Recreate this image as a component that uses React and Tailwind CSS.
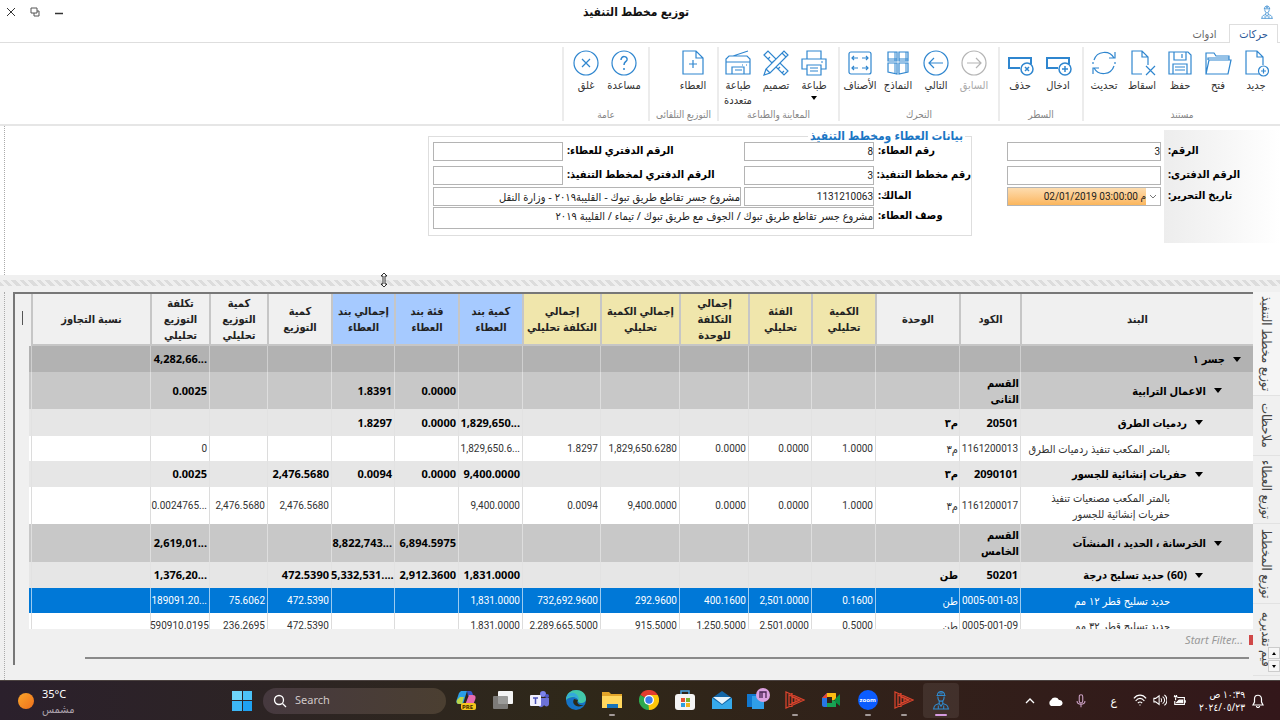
import React, { useState } from "react";

const ribbonGroups = [
  {
    title: "مستند",
    width: "w-[198px]",
    items: [
      { icon: "new", label: "جديد" },
      { icon: "open", label: "فتح" },
      { icon: "save", label: "حفظ" },
      { icon: "drop", label: "اسقاط" },
      { icon: "refresh", label: "تحديث" },
    ],
  },
  {
    title: "السطر",
    width: "w-[84px]",
    items: [
      { icon: "rowAdd", label: "ادخال" },
      { icon: "rowDelete", label: "حذف" },
    ],
  },
  {
    title: "التحرك",
    width: "w-[160px]",
    items: [
      { icon: "right", label: "السابق", disabled: true },
      { icon: "left", label: "التالي" },
      { icon: "forms", label: "النماذج" },
      { icon: "items", label: "الأصناف" },
    ],
  },
  {
    title: "المعاينة والطباعة",
    width: "w-[121px]",
    items: [
      { icon: "print", label: "طباعة", menu: true },
      { icon: "design", label: "تصميم" },
      { icon: "multiPrint", label: "طباعة متعددة" },
    ],
  },
  {
    title: "التوزيع التلقائى",
    width: "w-[69px]",
    items: [{ icon: "tender", label: "العطاء" }],
  },
  {
    title: "عامة",
    width: "w-[86px]",
    items: [
      { icon: "help", label: "مساعدة" },
      { icon: "close", label: "غلق" },
    ],
  },
];

const icons = {
  new: (
    <>
      <path d="M17 25H4V2h11l6 6v8M15 2v6h6" />
      <circle cx="21.500" cy="22" r="5" />
      <path d="M21.500 19.500v5M19 22h5" />
    </>
  ),
  open: <path d="M2 25V4h8l2 3h13v4M2 25l3-14h22l-3 14zM4 11V9h21" />,
  save: (
    <>
      <path d="M3 3h19l3 3v19H3zM8 3v8h12V3M7 25V15h14v10M9 18h10M9 21h10" />
      <path d="M16 5v4" />
    </>
  ),
  drop: <path d="M14 25H4V2h10l6 6v8M14 2v6h6M18 17l9 9M27 17l-9 9" />,
  refresh: <path d="M4 11A11 11 0 0 1 24 9M25 3v6h-6M24 17A11 11 0 0 1 4 19M3 25v-6h6M3 13v2M25 13v2" />,
  rowAdd: (
    <>
      <path d="M14 19H3V9h22v6" strokeWidth="2" />
      <circle cx="21" cy="20" r="6" fill="white" strokeWidth="1.500" />
      <path d="M21 17v6M18 20h6" strokeWidth="1.500" />
    </>
  ),
  rowDelete: (
    <>
      <path d="M14 19H3V9h22v6" strokeWidth="2" />
      <circle cx="21" cy="20" r="6" fill="white" strokeWidth="1.500" />
      <path d="M19 18l4 4M23 18l-4 4" strokeWidth="1.500" />
    </>
  ),
  right: (
    <>
      <circle cx="14" cy="14" r="12" />
      <path d="M7 14h14M16 9l5 5-5 5" />
    </>
  ),
  left: (
    <>
      <circle cx="14" cy="14" r="12" />
      <path d="M21 14H7M12 9l-5 5 5 5" />
    </>
  ),
  forms: (
    <>
      <path d="M4 3h9v9H4zM15 3h9v9h-9z" />
      <path d="M4 14h9v11l-9-2zM15 14h9v9l-9 2z" />
      <path d="M11 3v9M22 3v9M11 14v10M22 14v9M4 10h9M15 10h9" strokeWidth="1" />
    </>
  ),
  items: (
    <>
      <rect x="3" y="3" width="22" height="22" rx="2" />
      <path d="M12 9H6M8 7L6 9l2 2M16 9h6M20 7l2 2-2 2M12 19H6M8 17l-2 2 2 2M16 19h6M20 17l2 2-2 2" />
    </>
  ),
  print: (
    <>
      <path d="M7 10V2h14v8M7 20H2V10h24v10h-5" />
      <path d="M7 16h14v10H7zM10 19h8M10 22h8M21 13h2" />
    </>
  ),
  design: (
    <>
      <path d="M2 6l4-4 20 20-4 4zM6 10l2-2M10 14l2-2M16 20l2-2M20 24l2-2" />
      <path d="M2 26l2-6L22 2l4 4L8 24z" fill="white" />
      <path d="M20 4l4 4M4 20l4 4" />
    </>
  ),
  multiPrint: (
    <>
      <path d="M2 25V10l3-3h18l3 3v15H2zM2 13h24M6 7l3 0L24 2M8 25v-7h12v7M11 21h7" />
      <path d="M18 16h1M22 16h1" />
    </>
  ),
  tender: <path d="M4 2h13l7 7v16H4zM17 2v7h7M14 11v8M10 15h8" />,
  help: (
    <>
      <circle cx="14" cy="14" r="12" />
      <path d="M11 11c0-5 7-4 6 0-1 2-3 2-3 5M14 19v2" strokeWidth="1.500" />
    </>
  ),
  close: (
    <>
      <circle cx="14" cy="14" r="12" />
      <path d="M10 10l8 8M18 10l-8 8" />
    </>
  ),
};

const columns = [
  { title: "البند", width: "", tone: "bg-[#f0f0f0]" },
  { title: "الكود", width: "w-[61px]", tone: "bg-[#f0f0f0]" },
  { title: "الوحدة", width: "w-[84px]", tone: "bg-[#f0f0f0]" },
  { title: "الكمية\nتحليلي", width: "w-[64px]", tone: "bg-[#f0e6ac]" },
  { title: "الفئة\nتحليلي", width: "w-[63px]", tone: "bg-[#f0e6ac]" },
  { title: "إجمالي\nالتكلفة\nللوحدة", width: "w-[69px]", tone: "bg-[#f0e6ac]" },
  { title: "إجمالي الكمية\nتحليلي", width: "w-[79px]", tone: "bg-[#f0e6ac]" },
  { title: "إجمالي\nالتكلفة تحليلي", width: "w-[78px]", tone: "bg-[#f0e6ac]" },
  { title: "كمية بند\nالعطاء", width: "w-[64px]", tone: "bg-[#a6caff]" },
  { title: "فئة بند\nالعطاء", width: "w-[64px]", tone: "bg-[#a6caff]" },
  { title: "إجمالي بند\nالعطاء", width: "w-[63px]", tone: "bg-[#a6caff]" },
  { title: "كمية\nالتوزيع", width: "w-[64px]", tone: "bg-[#f0f0f0]" },
  { title: "كمية\nالتوزيع\nتحليلي", width: "w-[58px]", tone: "bg-[#f0f0f0]" },
  { title: "تكلفة\nالتوزيع\nتحليلي", width: "w-[59px]", tone: "bg-[#f0f0f0]" },
  { title: "نسبة التجاوز", width: "w-[119px]", tone: "bg-[#f0f0f0]" },
];

const rows = [
  { kind: "root", height: "h-[26px]", cells: ["جسر ١", "", "", "", "", "", "", "", "", "", "", "", "", "4,282,66...", ""] },
  { kind: "section", height: "h-[37px]", cells: ["الاعمال الترابية", "القسم الثانى", "", "", "", "", "", "", "", "0.0000", "1.8391", "", "", "0.0025", ""] },
  { kind: "item", height: "h-[27px]", cells: ["ردميات الطرق", "20501", "م٣", "", "", "", "", "", "1,829,650...", "0.0000", "1.8297", "", "", "", ""] },
  { kind: "leaf", height: "h-[25px]", cells: ["بالمتر المكعب تنفيذ ردميات الطرق", "1161200013", "م٣", "1.0000", "0.0000", "0.0000", "1,829,650.6280", "1.8297", "1,829,650.6...", "", "", "", "", "0", ""] },
  { kind: "item", height: "h-[26px]", cells: ["حفريات إنشائية للجسور", "2090101", "م٣", "", "", "", "", "", "9,400.0000", "0.0000", "0.0094", "2,476.5680", "", "0.0025", ""] },
  { kind: "leaf", height: "h-[37px]", cells: ["بالمتر المكعب مصنعيات تنفيذ حفريات إنشائية للجسور", "1161200017", "م٣", "1.0000", "0.0000", "0.0000", "9,400.0000", "0.0094", "9,400.0000", "", "", "2,476.5680", "2,476.5680", "0.0024765...", ""] },
  { kind: "section", height: "h-[38px]", cells: ["الخرسانة ، الحديد ، المنشآت", "القسم الخامس", "", "", "", "", "", "", "", "6,894.5975", "8,822,743...", "", "", "2,619,01...", ""] },
  { kind: "item", height: "h-[26px]", cells: ["(60) حديد تسليح درجة", "50201", "طن", "", "", "", "", "", "1,831.0000", "2,912.3600", "5,332,531....", "472.5390", "", "1,376,20...", ""] },
  { kind: "selected", height: "h-[25px]", cells: ["حديد تسليح قطر ١٢ مم", "0005-001-03", "طن", "0.1600", "2,501.0000", "400.1600", "292.9600", "732,692.9600", "1,831.0000", "", "", "472.5390", "75.6062", "189091.20...", ""] },
  { kind: "leaf", height: "h-[25px]", cells: ["حديد تسليح قطر ٣٢ مم", "0005-001-09", "طن", "0.5000", "2,501.0000", "1,250.5000", "915.5000", "2,289,665.5000", "1,831.0000", "", "", "472.5390", "236.2695", "590910.0195", ""] },
];

const rowStyles = {
  root: "bg-[#b2b2b2] font-bold text-black",
  section: "bg-[#c8c8c8] font-bold text-black",
  item: "bg-[#e6e6e6] font-bold text-black",
  leaf: "bg-white text-[#333]",
  selected: "bg-[#0078d7] text-white",
};

const borderStyles = {
  root: "border-[#cfcfcf]",
  section: "border-[#dedede]",
  item: "border-[#e2e2e2]",
  leaf: "border-[#dcdcdc]",
  selected: "border-[#9ccbf0]",
};

const indents = {
  root: "pr-3",
  section: "pr-[31px]",
  item: "pr-[50px]",
  leaf: "pr-[83px]",
  selected: "pr-[83px]",
};

const sideTabs = [
  { label: "توزيع مخطط التنفيذ", height: "h-[104px]", active: true },
  { label: "ملاحظات", height: "h-[60px]" },
  { label: "توزيع العطاء", height: "h-[68px]" },
  { label: "توزيع المخطط", height: "h-[80px]" },
  { label: "قيم تقديريه", height: "h-[72px]" },
];

const RibbonButton = ({ icon, label, disabled, menu }) => (
  <button
    type="button"
    disabled={disabled}
    className={`flex w-[38px] shrink-0 flex-col items-center ${disabled ? "text-[#aaa]" : "text-[#333]"}`}
  >
    <svg
      viewBox="0 0 28 28"
      className={`size-7 fill-none ${disabled ? "stroke-[#b4b4b4]" : "stroke-[#2f86cf]"}`}
      strokeWidth="1.2"
    >
      {icons[icon]}
    </svg>
    <span className="text-[11px] leading-[15px]">{label}</span>
    {menu && <span className="mt-1 border-x-3 border-t-4 border-x-transparent border-t-black" />}
  </button>
);

const Ribbon = () => (
  <div className="flex h-[83px] border-b-2 border-[#e6e6e6] pt-1 pb-[3px]">
    {ribbonGroups.map((group) => (
      <section key={group.title} className={`flex shrink-0 flex-col justify-between border-l-2 border-[#ececec] ${group.width}`}>
        <div className="flex h-[60px] items-start pt-0.5 pr-[5px]">
          {group.items.map((item) => (
            <RibbonButton key={item.icon} {...item} />
          ))}
        </div>
        <h2 className="text-center text-[10px] leading-[14px] whitespace-nowrap text-[#858585]">{group.title}</h2>
      </section>
    ))}
  </div>
);

const inputClass = "h-[19px] w-full border border-[#b4b4b4] bg-white text-right text-[11px] leading-4 text-[#222] outline-none";
const numberClass =
  "h-[19px] w-full border border-[#b4b4b4] bg-white text-right font-['Roboto',sans-serif] text-[10px] leading-4 text-[#222] outline-none";
const labelClass = "pl-1 text-left text-[11px] leading-4 font-bold whitespace-nowrap text-black";

const DocumentForm = () => (
  <div className="flex h-[149px] pt-1">
    <div className="grid h-[113px] w-[116px] grid-cols-1 grid-rows-[24px_21px_19px] content-start bg-linear-to-l from-white to-[#ededed] pt-3">
      <label htmlFor="number" className={labelClass}>الرقم:</label>
      <label htmlFor="bookNumber" className={labelClass}>الرقم الدفترى:</label>
      <label htmlFor="date" className={labelClass}>تاريخ التحرير:</label>
    </div>
    <div className="mr-[3px] grid w-[154px] grid-cols-1 grid-rows-[24px_21px_19px] content-start pt-3">
      <input id="number" defaultValue="3" className={numberClass} />
      <input id="bookNumber" defaultValue="" className={numberClass} />
      <div className="flex h-[19px] border border-[#b4b4b4]">
        <button type="button" aria-label="التقويم" className="flex w-3.5 items-center justify-center bg-white">
          <svg viewBox="0 0 8 6" className="w-2 fill-none stroke-[#777]"><path d="M1 1l3 3 3-3" /></svg>
        </button>
        <input
          id="date"
          dir="ltr"
          defaultValue="02/01/2019 03:00:00 م"
          className="min-w-0 flex-1 bg-linear-to-b from-[#fddcae] to-[#fbb65c] text-right font-['Roboto','DejaVu_Sans_Condensed',sans-serif] text-[10px] text-[#222] outline-none"
        />
      </div>
    </div>
    <fieldset className="mr-[35px] h-[106px] w-[544px] border border-[#dedede] pl-1">
      <legend className="mr-1.5 h-3 px-0.5 text-xs leading-3 font-bold text-[#1b76c4]">بيانات العطاء ومخطط التنفيذ</legend>
      <div className="grid grid-cols-[97px_130px_181px_1fr] grid-rows-[24px_21px_20px_23px]">
        <label htmlFor="tender" className={labelClass}>رقم العطاء:</label>
        <input id="tender" defaultValue="8" className={numberClass} />
        <label htmlFor="tenderBook" className={labelClass}>الرقم الدفتري للعطاء:</label>
        <input id="tenderBook" defaultValue="" className={numberClass} />
        <label htmlFor="plan" className={labelClass}>رقم مخطط التنفيذ:</label>
        <input id="plan" defaultValue="3" className={numberClass} />
        <label htmlFor="planBook" className={labelClass}>الرقم الدفتري لمخطط التنفيذ:</label>
        <input id="planBook" defaultValue="" className={numberClass} />
        <label htmlFor="owner" className={labelClass}>المالك:</label>
        <input id="owner" defaultValue="1131210063" className={numberClass} />
        <div className="col-span-2 flex pr-[3px]">
          <input aria-label="اسم المالك" defaultValue="مشروع جسر تقاطع طريق تبوك - القليبة٢٠١٩ - وزارة النقل" className={inputClass} />
        </div>
        <label htmlFor="description" className={labelClass}>وصف العطاء:</label>
        <textarea
          id="description"
          defaultValue="مشروع جسر تقاطع طريق تبوك / الجوف مع طريق تبوك / تيماء / القليبة ٢٠١٩"
          className="col-span-3 h-[22px] resize-none overflow-hidden border border-[#b4b4b4] text-right text-[11px] leading-4 text-[#222] outline-none"
        />
      </div>
    </fieldset>
  </div>
);

const TreeCell = ({ kind, text }) => (
  <td className={`border-l py-0 text-right leading-4 ${borderStyles[kind]} ${indents[kind]}`}>
    {kind === "leaf" || kind === "selected" ? (
      text
    ) : (
      <span className="flex items-center gap-2">
        <span className="border-x-4 border-t-5 border-x-transparent border-t-black" />
        {text}
      </span>
    )}
  </td>
);

const ValueCell = ({ kind, height, text }) => {
  const number = /[0-9]/.test(text);
  const light = kind === "leaf" || kind === "selected";

  return (
    <td
      dir={number ? "ltr" : "rtl"}
      className={`border-l py-0 pr-px pl-0 text-right leading-4 ${height} ${borderStyles[kind]} ${number ? "whitespace-nowrap" : ""} ${
        number && light ? "font-['Roboto',sans-serif] text-[10px]" : ""
      }`}
    >
      {text}
    </td>
  );
};

const Grid = () => (
  <div className="flex h-[373px] min-w-0 flex-1 flex-col border-t-2 border-l-2 border-[#777] bg-[#f0f0f0]">
    <div className="flex h-[335px] overflow-hidden">
      <table className="w-full table-fixed border-separate border-spacing-0 self-start text-[11px]">
        <thead>
          <tr>
            {columns.map((col) => (
              <th
                key={col.title}
                className={`h-[52px] border-b-2 border-l-2 border-[#c6c6c6] p-0 leading-4 font-bold whitespace-pre-line text-[#222] ${col.width} ${col.tone}`}
              >
                {col.title}
              </th>
            ))}
            <th className="w-0.5 p-0" />
          </tr>
        </thead>
        <tbody>
          {rows.map((row) => (
            <tr key={row.cells[0]} className={rowStyles[row.kind]}>
              <TreeCell kind={row.kind} text={row.cells[0]} />
              {row.cells.slice(1).map((cell, i) => (
                <ValueCell key={i} kind={row.kind} height={row.height} text={cell} />
              ))}
              <td className="p-0" />
            </tr>
          ))}
        </tbody>
      </table>
      <div className="w-3.5 shrink-0 pt-[17px]">
        <div className="mr-1.5 h-3.5 w-px bg-[#555]" />
      </div>
    </div>
    <div className="flex h-[22px] items-center">
      <span className="h-2.5 w-1 bg-[#d04848]" />
      <input
        dir="ltr"
        aria-label="Start Filter"
        placeholder="Start Filter..."
        className="mr-1.5 w-24 text-right text-[11px] italic outline-none placeholder:text-[#999]"
      />
    </div>
    <div className="mt-1.5 mr-1 ml-[70px] h-0.5 bg-[#8a8a8a]" />
  </div>
);

const SideTabs = () => (
  <div className="relative flex h-[388px] w-[27px] flex-col overflow-hidden">
    {sideTabs.map((tab) => (
      <button
        key={tab.label}
        type="button"
        className={`flex shrink-0 items-center justify-center border-b border-[#e2e2e2] text-[13px] text-[#444] ${tab.height} ${
          tab.active ? "bg-[#f5f5f5]" : "bg-[#f0f0f0]"
        }`}
      >
        <span className="whitespace-nowrap [writing-mode:vertical-rl]">{tab.label}</span>
      </button>
    ))}
    <div className="absolute right-0 bottom-2 flex w-3 flex-col gap-px">
      <button type="button" aria-label="أعلى" className="flex h-3 items-center justify-center border border-[#ccc] bg-[#f6f6f6]">
        <span className="border-x-2 border-b-3 border-x-transparent border-b-black" />
      </button>
      <button type="button" aria-label="أسفل" className="flex h-3 items-center justify-center border border-[#ccc] bg-[#f6f6f6]">
        <span className="border-x-2 border-t-3 border-x-transparent border-t-black" />
      </button>
    </div>
  </div>
);

const Engineer = ({ className }) => (
  <svg viewBox="0 0 20 22" className={className} strokeWidth="1.2">
    <path d="M6 6c0-6 8-6 8 0M5 6h10M6.500 7c0 7 7 7 7 0M9 2v3M11 2v3M8 12v3l2 3 2-3v-3M2 21c0-5 3-5 6-6M18 21c0-5-3-5-6-6M1 21h18M7 17v4M13 17v4" />
  </svg>
);

const Player = () => (
  <svg viewBox="0 0 20 20" className="size-5 fill-none stroke-[#d8432c]" strokeWidth="1.3">
    <path d="M1 2v16l18-8zM4 5v10l11-5zM7 3v14M7 7l7 3-7 3M10 7v6" />
  </svg>
);

const apps = [
  {
    name: "Copilot",
    art: (
      <svg viewBox="0 0 20 20" className="size-5">
        <path d="M5 1h6L7 14H3c-3 0-3-3-2-5L3 3z" fill="#2a9ee8" />
        <path d="M1 10l3-3h4l-2 7H3c-2 0-3-2-2-4z" fill="#b9d54a" />
        <path d="M11 1h3c2 0 2 1 3 4l-5 1z" fill="#3556c9" />
        <path d="M13 5h4c3 0 3 3 2 5l-2 5H9z" fill="#e66bb0" />
        <rect x="5" y="13" width="15" height="7" rx="2" fill="#f6c51d" />
        <text x="6" y="19" fontSize="6" fontWeight="bold" fill="#3a2b00">PRE</text>
      </svg>
    ),
  },
  {
    name: "Task View",
    art: (
      <svg viewBox="0 0 20 20" className="size-5">
        <rect x="5" y="1" width="15" height="13" rx="1" fill="#f4f4f4" />
        <rect x="0" y="6" width="15" height="13" rx="1" fill="#8b8b88" fillOpacity=".85" />
      </svg>
    ),
  },
  {
    name: "Teams",
    art: (
      <svg viewBox="0 0 20 20" className="size-5">
        <circle cx="14" cy="4" r="3" fill="#7b83eb" />
        <circle cx="18" cy="6" r="2" fill="#5059c9" />
        <path d="M9 8h11v6c0 3-4 3-5 1-1 3-6 3-6-1z" fill="#6c72d9" />
        <rect x="1" y="5" width="11" height="11" rx="1" fill="#f1f0ff" />
        <path d="M4 8h5M6.500 8v6" stroke="#4b53bc" strokeWidth="1.500" />
      </svg>
    ),
  },
  {
    name: "Edge",
    art: (
      <svg viewBox="0 0 20 20" className="size-5">
        <circle cx="10" cy="10" r="10" fill="#1573c5" />
        <path d="M0 10C0-3 20-3 20 9c0 5-8 5-8 2 1-4-7-6-12-1z" fill="#42c8a9" />
        <path d="M0 10C1 0 12 1 13 10 8 4 1 6 0 10z" fill="#33a9dc" />
        <path d="M8 9c-3 5 3 10 10 6-5 1-8-2-6-5z" fill="#2c2a18" />
      </svg>
    ),
  },
  {
    name: "File Explorer",
    running: true,
    art: (
      <svg viewBox="0 0 20 20" className="size-5">
        <path d="M0 2h7l2 2h11v14H0z" fill="#e2a52a" />
        <path d="M0 6h20v12H0z" fill="#ffd75e" />
        <path d="M5 14h11v4H5z" fill="#1673ba" />
      </svg>
    ),
  },
  {
    name: "Chrome",
    art: (
      <svg viewBox="0 0 20 20" className="size-5">
        <path d="M10 10L1.300 5A10 10 0 0 1 18.700 5z" fill="#e33b2e" />
        <path d="M10 10L1.300 5A10 10 0 0 0 10 20z" fill="#2da94f" />
        <path d="M10 10h-1l1 10a10 10 0 0 0 8.700-15H10z" fill="#fdc60a" />
        <circle cx="10" cy="10" r="5" fill="#fff" />
        <circle cx="10" cy="10" r="3.700" fill="#3a7cec" />
      </svg>
    ),
  },
  {
    name: "Store",
    art: (
      <svg viewBox="0 0 20 20" className="size-5">
        <path d="M6 5V1h8v4" stroke="#4aa3df" fill="none" strokeWidth="1.500" />
        <rect x="0" y="4" width="20" height="16" rx="3" fill="#f4f4f4" />
        <path d="M6 8h4v4H6z" fill="#e5512f" />
        <path d="M11 8h4v4h-4z" fill="#7bb32e" />
        <path d="M6 13h4v4H6z" fill="#2d9fdf" />
        <path d="M11 13h4v4h-4z" fill="#f3b41b" />
      </svg>
    ),
  },
  {
    name: "Mail",
    art: (
      <svg viewBox="0 0 20 20" className="size-5">
        <path d="M0 8l10-7 10 7v11H0z" fill="#1467a8" />
        <path d="M1 7h18L10 14z" fill="#e8f4fc" />
        <path d="M0 8l10 7 10-7v11H0z" fill="#36a9ea" />
      </svg>
    ),
  },
  {
    name: "Phone Link",
    art: (
      <svg viewBox="0 0 26 24" className="h-6 w-[26px]">
        <path d="M2 6h12v13H2z" fill="#1177ce" />
        <path d="M7 8h12v13H7z" fill="#2f9ee8" />
        <circle cx="18" cy="7" r="7" fill="#dba0e0" />
        <path d="M15 10V4h2v6M17 4h4v6" fill="none" stroke="#4b2455" strokeWidth="1.300" />
      </svg>
    ),
  },
  { name: "Player", running: true, art: <Player /> },
  {
    name: "Meet",
    art: (
      <svg viewBox="0 0 20 20" className="size-5">
        <path d="M1 8l5-5v14H3c-1 0-2-1-2-2z" fill="#2776e8" />
        <path d="M6 3h8c1 0 1 0 1 2v4l-4 2V7H6z" fill="#fcbb12" />
        <path d="M6 13h5v-3l4 1v6H6z" fill="#18a354" />
        <path d="M14 9l5-5v12l-5-4z" fill="#0b8f43" />
        <path d="M1 8l5-5v5z" fill="#e94335" />
      </svg>
    ),
  },
  {
    name: "Zoom",
    running: true,
    art: (
      <span className="flex size-5 items-center justify-center rounded-full bg-[#0b5cff] text-[6px] font-bold text-white">zoom</span>
    ),
  },
  { name: "Player 2", running: true, art: <Player /> },
  { name: "ERP", active: true, art: <Engineer className="h-5 w-[18px] fill-none stroke-[#2f8bd0]" /> },
];

const Taskbar = () => (
  <footer
    dir="ltr"
    className="flex h-10 items-center border-t border-[#4b4240] bg-linear-to-r from-[#2b202c] via-[#2f2819] via-45% to-[#33171a] text-white"
  >
    <button type="button" className="flex w-[222px] items-center gap-2 pl-[18px] text-left">
      <span className="size-4 rounded-full bg-linear-to-br from-[#f9a52b] to-[#ee6f1c]" />
      <span className="flex flex-col text-[11px] leading-[15px]">
        <span>35°C</span>
        <span className="text-[#aaa0aa]">مشمس</span>
      </span>
    </button>
    <button type="button" aria-label="Start" className="ml-2.5 grid size-5 shrink-0 grid-cols-2 gap-px">
      <span className="bg-[#6fd6fb]" />
      <span className="bg-[#4cc3f8]" />
      <span className="bg-[#3db8f6]" />
      <span className="bg-[#1fa2f2]" />
    </button>
    <label className="ml-[11px] flex h-[26px] w-[183px] shrink-0 items-center gap-2 rounded-full bg-linear-to-r from-[#46393f] to-[#4b3f31] px-2.5">
      <svg viewBox="0 0 14 14" className="size-3.5 fill-none stroke-white" strokeWidth="1.3">
        <circle cx="6" cy="6" r="4.500" />
        <path d="M9.500 9.500L13 13" />
      </svg>
      <input aria-label="Search" placeholder="Search" className="w-24 text-[11px] outline-none placeholder:text-[#d0c8c8]" />
    </label>
    <nav className="flex h-full w-[513px] shrink-0 pl-0.5">
      {apps.map((app) => (
        <button
          key={app.name}
          type="button"
          aria-label={app.name}
          className={`flex flex-1 flex-col items-center justify-end gap-0.5 ${
            app.active ? "my-0.5 rounded bg-white/8 pb-0.5" : "pb-1"
          }`}
        >
          <span className="flex h-6 items-center">{app.art}</span>
          <span className={`h-0.5 rounded-full ${app.active ? "w-3 bg-[#d59be0]" : app.running ? "w-1.5 bg-[#a39a98]" : "w-1.5"}`} />
        </button>
      ))}
    </nav>
    <div className="ml-auto flex shrink-0 items-center pr-4">
      <svg viewBox="0 0 10 6" className="w-2.5 fill-none stroke-white" strokeWidth="1.3"><path d="M1 5l4-4 4 4" /></svg>
      <svg viewBox="0 0 16 10" className="ml-3 w-4 fill-white"><path d="M4 10a3.500 3.500 0 0 1 0-6 4.500 4.500 0 0 1 8 0 3 3 0 0 1 1 6z" /></svg>
      <svg viewBox="0 0 12 16" className="ml-3 h-3.5 w-3 fill-none stroke-[#cfa3c8]" strokeWidth="1.200"><path d="M4 3c0-3 4-3 4 0v5c0 3-4 3-4 0zM1.500 8c0 5 9 5 9 0M6 12v3" /></svg>
      <span className="ml-6 text-xs">ع</span>
      <svg viewBox="0 0 16 14" className="ml-4 w-3.5 fill-none stroke-white" strokeWidth="1.300"><path d="M1 5c4-5 10-5 14 0M3 8c3-4 7-4 10 0M5.500 10.500c2-2 3-2 5 0M8 12v1" /></svg>
      <svg viewBox="0 0 16 14" className="ml-1.5 w-3.5 fill-none stroke-white" strokeWidth="1.200"><path d="M1 5h2l4-3v10L3 9H1zM9 5c1 1 1 3 0 4M11 3c3 2 3 6 0 8M13 1c4 3 4 9 0 12" /></svg>
      <svg viewBox="0 0 16 14" className="ml-1.5 w-3.5 fill-none stroke-white" strokeWidth="1.300"><path d="M5 4h8v8H2V8M14 7v3" /><path d="M7 7h4v3H4zM1 3h4M2 1v2M4 1v2M3 4v3" fill="white" /></svg>
      <div dir="rtl" className="ml-2.5 w-12 text-[10px] leading-[13px] whitespace-nowrap">
        <div>١٠:٣٩ ص</div>
        <div dir="ltr" className="text-right">٢٠٢٤/٠٥/٢٣</div>
      </div>
      <svg viewBox="0 0 12 14" className="ml-[7px] w-3 fill-none stroke-white" strokeWidth="1.200"><path d="M1 11h10L9.500 8V5c0-5-7-5-7 0v3zM4.500 12c0 2 3 2 3 0" /></svg>
    </div>
  </footer>
);

const App = () => {
  const [tab, setTab] = useState("حركات");

  return (
    <div
      dir="rtl"
      className="flex min-h-screen flex-col overflow-hidden bg-white font-['Noto_Sans','DejaVu_Sans_Condensed','DejaVu_Sans',sans-serif]"
    >
      <header className="flex h-6 items-center justify-between px-1.5">
        <div className="w-[66px]">
          <Engineer className="h-3.5 w-3.5 fill-none stroke-[#2f86cf]" />
        </div>
        <h1 className="text-xs font-bold text-[#111]">توزيع مخطط التنفيذ</h1>
        <div dir="ltr" className="flex gap-3.5">
          <button type="button" aria-label="إغلاق">
            <svg viewBox="0 0 10 10" className="size-2.5 stroke-[#333]"><path d="M1 1l8 8M9 1L1 9" /></svg>
          </button>
          <button type="button" aria-label="استعادة">
            <svg viewBox="0 0 10 10" className="size-2.5 fill-none stroke-[#555]"><path d="M1 1h6v5H1zM4 6v3h5V4H7" /></svg>
          </button>
          <button type="button" aria-label="تصغير">
            <svg viewBox="0 0 10 10" className="size-2.5 stroke-[#333]"><path d="M1 6.500h8" strokeWidth="1.500" /></svg>
          </button>
        </div>
      </header>

      <nav className="flex h-[19px] border-b border-[#dedede] pr-0.5">
        {["حركات", "ادوات"].map((name) => (
          <button
            key={name}
            type="button"
            onClick={() => setTab(name)}
            className={`h-[19px] w-[49px] text-[11px] leading-[18px] ${
              tab === name ? "border border-b-0 border-[#dedede] bg-white text-[#2b5797]" : "text-[#666]"
            }`}
          >
            {name}
          </button>
        ))}
      </nav>

      <Ribbon />

      <main className="flex flex-1 flex-col">
        <div className="ml-1 border-l border-dotted border-[#aaa]">
          <DocumentForm />
        </div>
        <div className="relative h-[17px] bg-[#f0f0f0] pt-[5px]">
          <div className="h-1.5 bg-[repeating-linear-gradient(45deg,#dcdcdc_0px,#dcdcdc_3px,#efefef_3px,#efefef_6px)]" />
          <svg viewBox="0 0 8 16" className="absolute -top-[3px] left-[380px] h-4 w-2 fill-white stroke-black" strokeWidth="0.8">
            <path d="M4 1l3 3H5v8h2l-3 3-3-3h2V4H1z" />
          </svg>
        </div>
        <div className="flex flex-1 bg-[#f0f0f0] pl-1">
          <SideTabs />
          <Grid />
          <div className="w-[9px] border-l border-dotted border-[#aaa]" />
        </div>
      </main>

      <Taskbar />
    </div>
  );
};

export default App;
